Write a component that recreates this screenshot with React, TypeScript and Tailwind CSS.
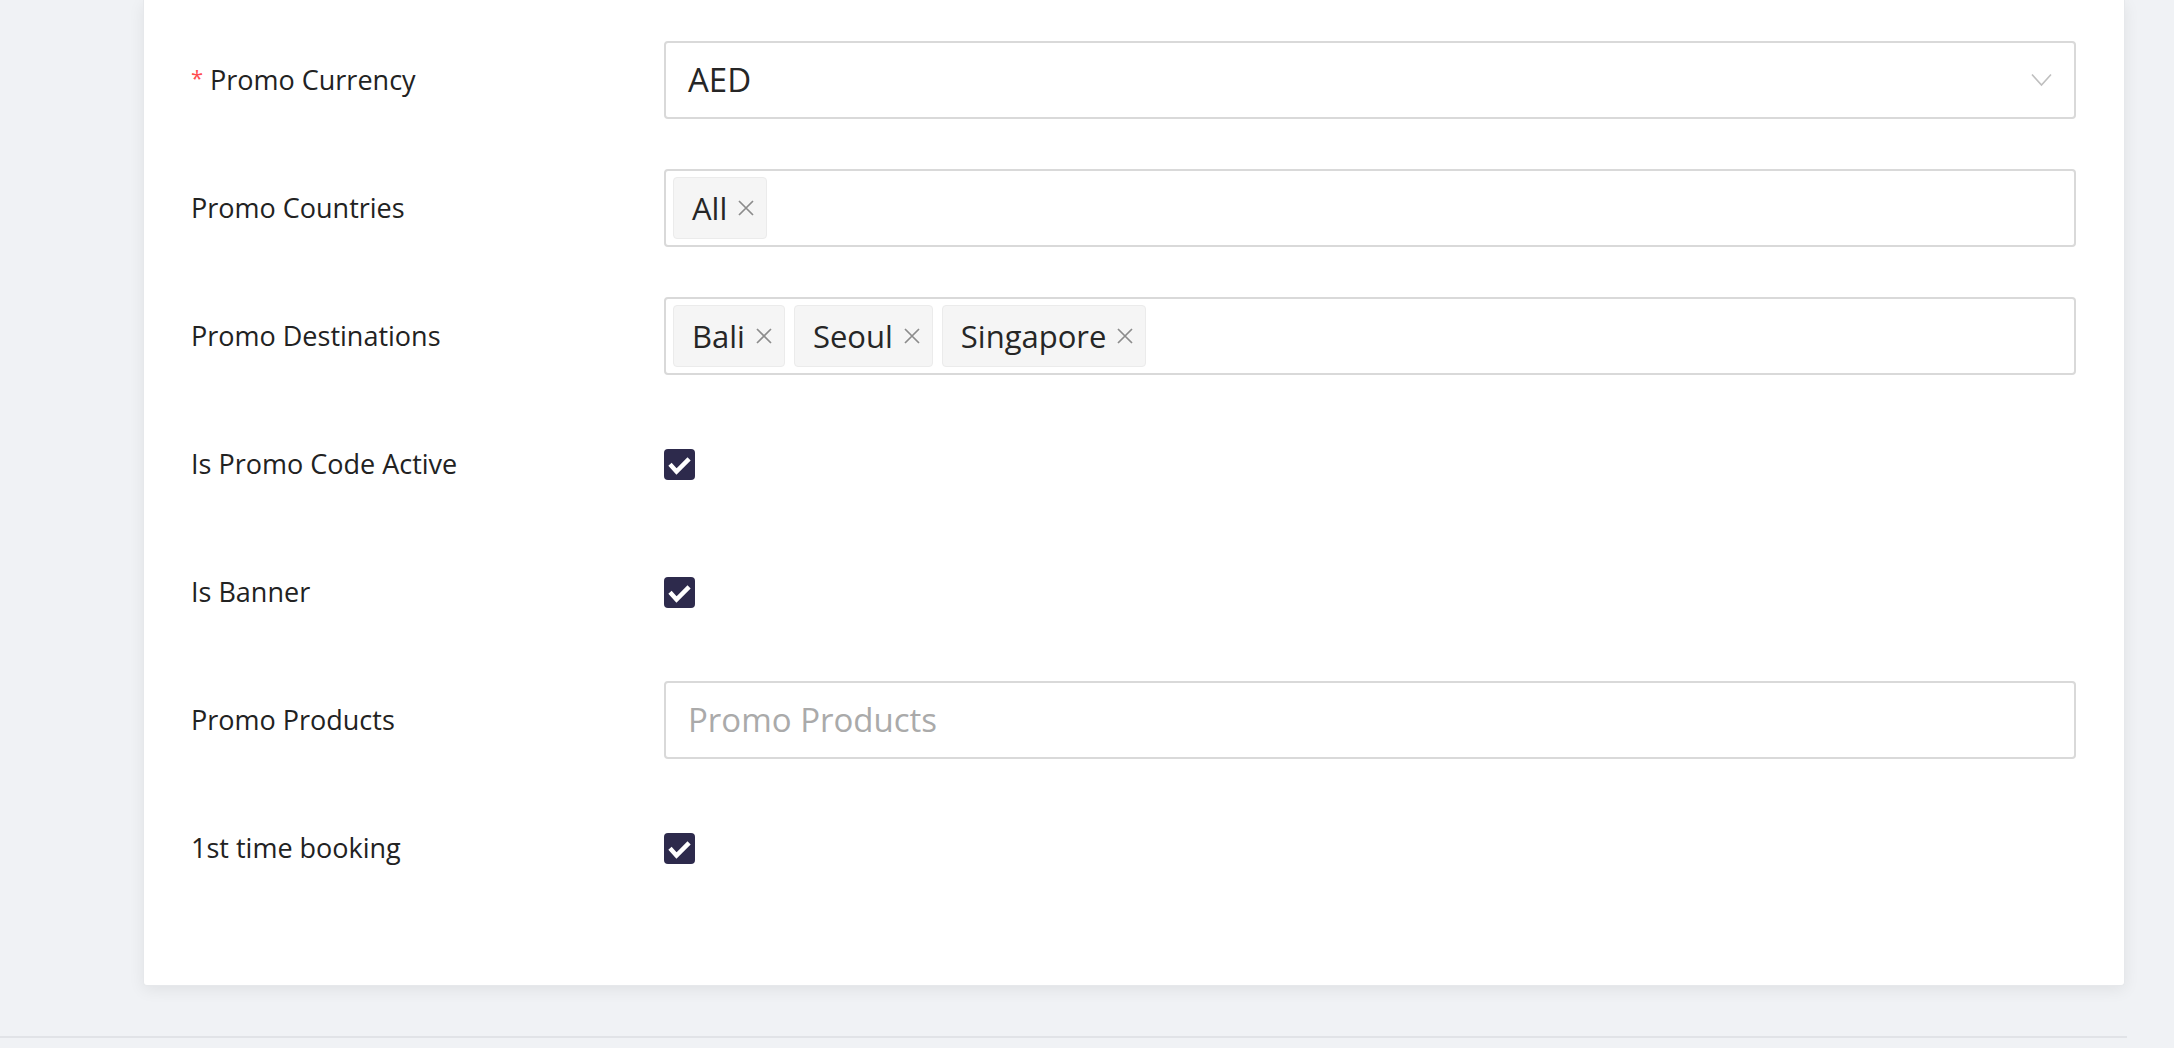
import React from 'react';

const font = { fontFamily: '"Open Sans", "Noto Sans", sans-serif' };

function CloseIcon() {
  return (
    <svg width="16" height="16" viewBox="0 0 16 16" className="shrink-0">
      <path d="M1 1L15 15M15 1L1 15" stroke="#8c8c8c" strokeWidth="1.7" fill="none" />
    </svg>
  );
}

function Tag({ label }: { label: string }) {
  return (
    <div className="flex items-center h-[62px] pl-[18px] pr-[12px] gap-[11px] bg-[#f5f5f5] border border-[#ebebeb] rounded-[4px]">
      <span className="text-[31px] text-[#262626] leading-none">{label}</span>
      <CloseIcon />
    </div>
  );
}

function Checkbox() {
  return (
    <div className="w-[31px] h-[31px] rounded-[4px] bg-[#2d2a4c] flex items-center justify-center">
      <svg width="31" height="31" viewBox="0 0 31 31">
        <path d="M7.5 17L12.5 22.5L23.5 11.5" stroke="#fff" strokeWidth="4.5" fill="none" strokeLinecap="square" />
      </svg>
    </div>
  );
}

function Row({ label, required, children }: { label: string; required?: boolean; children: React.ReactNode }) {
  return (
    <div className="flex items-center h-[78px]">
      <div className="w-[473px] shrink-0 text-[27px] text-[#222222] flex items-center">
        {required && <span className="w-[19px] text-[22px] text-[#ff4d4f] -mt-[6px]">*</span>}
        <span>{label}</span>
      </div>
      <div className="flex-1 flex items-center h-full">{children}</div>
    </div>
  );
}

function TagBox({ tags }: { tags: string[] }) {
  return (
    <div className="w-full h-full border-2 border-[#d9d9d9] rounded-[4px] flex items-center gap-[9px] pl-[7px]">
      {tags.map((t) => (
        <Tag key={t} label={t} />
      ))}
    </div>
  );
}

export default function App() {
  return (
    <div className="w-full h-[1048px] bg-[#f0f2f5] overflow-hidden" style={font}>
      <div className="pl-[143px]">
        <div className="w-[1982px] bg-white rounded-b-[4px] border-x border-b border-[#e6e8eb] shadow-[0_4px_16px_rgba(0,0,0,0.07)] pt-[41px] pb-[98px] pl-[47px] pr-[48px] flex flex-col gap-[50px]">
          <Row label="Promo Currency" required>
            <div className="w-full h-full border-2 border-[#d9d9d9] rounded-[4px] flex items-center justify-between pl-[22px] pr-[22px]">
              <span className="text-[33px] text-[#262626]">AED</span>
              <svg width="21" height="14" viewBox="0 0 21 14">
                <path d="M1 1.5L10.5 12L20 1.5" stroke="#bfbfbf" strokeWidth="1.6" fill="none" />
              </svg>
            </div>
          </Row>
          <Row label="Promo Countries">
            <TagBox tags={['All']} />
          </Row>
          <Row label="Promo Destinations">
            <TagBox tags={['Bali', 'Seoul', 'Singapore']} />
          </Row>
          <Row label="Is Promo Code Active">
            <Checkbox />
          </Row>
          <Row label="Is Banner">
            <Checkbox />
          </Row>
          <Row label="Promo Products">
            <div className="w-full h-full border-2 border-[#d9d9d9] rounded-[4px] flex items-center pl-[22px]">
              <span className="text-[33px] text-[#aaaaaa]">Promo Products</span>
            </div>
          </Row>
          <Row label="1st time booking">
            <Checkbox />
          </Row>
        </div>
      </div>
      <div className="mt-[50px] w-[2127px] h-[2px] bg-[#e1e3e7]" />
    </div>
  );
}
